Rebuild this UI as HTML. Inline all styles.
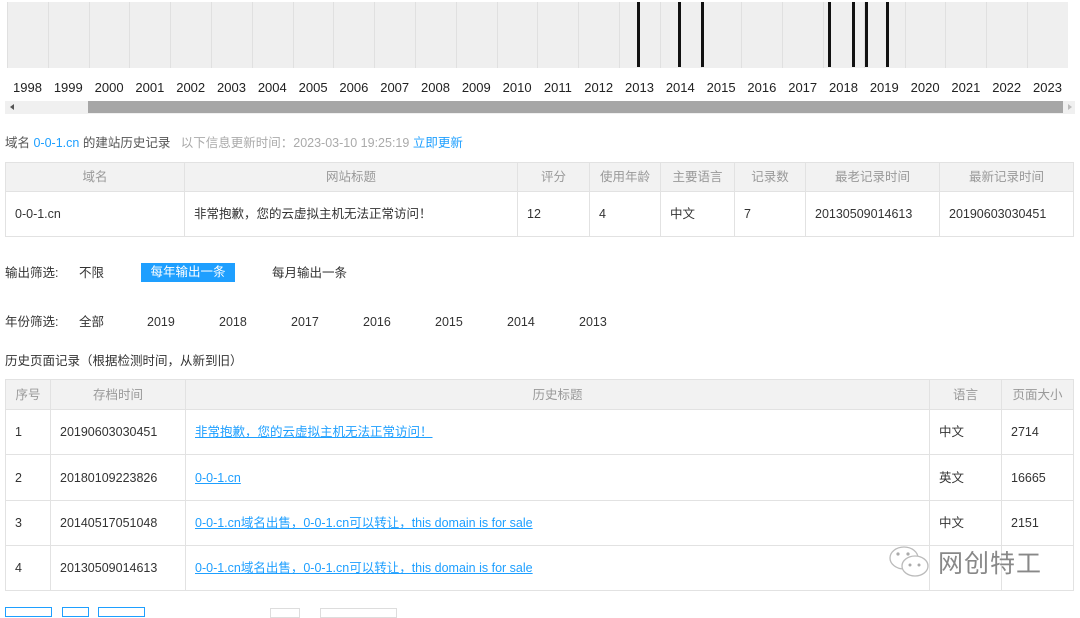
<!DOCTYPE html>
<html><head><meta charset="utf-8"><style>
*{margin:0;padding:0;box-sizing:border-box}
body{width:1080px;height:611px;overflow:hidden;background:#fff;font-family:"Liberation Sans","Noto Sans CJK SC",sans-serif;font-size:12.5px;line-height:16px;color:#333;position:relative}
.a{position:absolute;line-height:16px;white-space:nowrap}
.cell{position:absolute;top:2px;height:66px;width:41px;background:#efefef;border-left:1px solid #e0e0e0}
.yr{position:absolute;top:80px;width:41px;text-align:center;font-size:13px;line-height:16px;color:#222}
.bar{position:absolute;top:2px;height:65px;width:3px;background:#111}
table{position:absolute;border-collapse:collapse;font-size:12.5px;table-layout:fixed}
td,th{border:1px solid #e2e2e2;padding:0 9px;text-align:left;font-weight:normal;white-space:nowrap;line-height:16px;vertical-align:middle;overflow:hidden}
td span,th span,a{display:inline-block;height:16px;line-height:16px;vertical-align:middle}
th{background:#f2f2f2;color:#999;text-align:center}
a{color:#1e9fff;text-decoration:underline}
</style></head><body>
<div id="tl"></div>
<script>
var s='';for(var i=0;i<26;i++){var x=7+i*40.8;s+='<div class="cell" style="left:'+x+'px"></div><div class="yr" style="left:'+x+'px">'+(1998+i)+'</div>';}
[638,679,702,829,853,866,887].forEach(function(x){s+='<div class="bar" style="left:'+(x-1)+'px"></div>'});
document.getElementById('tl').innerHTML=s;
</script>
<div class="a" style="left:5px;top:101px;width:1070px;height:13px;background:#f0f0f0"></div>
<div class="a" style="left:88px;top:101px;width:975px;height:12px;background:#a6a6a6"></div>
<div class="a" style="left:10px;top:104px;width:0;height:0;border:3px solid transparent;border-right:4px solid #555;border-left:0"></div>
<div class="a" style="left:1068px;top:104px;width:0;height:0;border:3px solid transparent;border-left:4px solid #bbb;border-right:0"></div>
<div class="a" style="left:5px;top:135px;color:#555">域名 <span style="color:#1e9fff">0-0-1.cn</span> 的建站历史记录 &nbsp;&nbsp;<span style="color:#aaa">以下信息更新时间：2023-03-10 19:25:19</span> <span style="color:#1e9fff">立即更新</span></div>
<table style="left:5px;top:162px;width:1069px">
<tr style="height:29px"><th style="width:179px">域名</th><th style="width:333px">网站标题</th><th style="width:72px">评分</th><th style="width:71px">使用年龄</th><th style="width:74px">主要语言</th><th style="width:71px">记录数</th><th style="width:134px">最老记录时间</th><th>最新记录时间</th></tr>
<tr style="height:45px"><td><span>0-0-1.cn</span></td><td><span>非常抱歉，您的云虚拟主机无法正常访问！</span></td><td><span>12</span></td><td><span>4</span></td><td><span>中文</span></td><td><span>7</span></td><td><span>20130509014613</span></td><td><span>20190603030451</span></td></tr>
</table>
<div class="a" style="left:5px;top:265px">输出筛选:</div>
<div class="a" style="left:79px;top:265px">不限</div>
<div class="a" style="left:141px;top:263px;width:94px;height:19px;background:#1e9fff;color:#fff;text-align:center;line-height:19px">每年输出一条</div>
<div class="a" style="left:272px;top:265px">每月输出一条</div>
<div class="a" style="left:5px;top:314px">年份筛选:</div>
<div class="a" style="left:79px;top:314px">全部</div>
<div class="a" style="left:147px;top:314px">2019</div><div class="a" style="left:219px;top:314px">2018</div><div class="a" style="left:291px;top:314px">2017</div><div class="a" style="left:363px;top:314px">2016</div><div class="a" style="left:435px;top:314px">2015</div><div class="a" style="left:507px;top:314px">2014</div><div class="a" style="left:579px;top:314px">2013</div>
<div class="a" style="left:5px;top:353px">历史页面记录（根据检测时间，从新到旧）</div>
<table style="left:5px;top:379px;width:1069px">
<tr style="height:30px"><th style="width:45px">序号</th><th style="width:135px">存档时间</th><th style="width:744px">历史标题</th><th style="width:72px">语言</th><th>页面大小</th></tr>
<tr style="height:45px"><td><span>1</span></td><td><span>20190603030451</span></td><td><a>非常抱歉，您的云虚拟主机无法正常访问！</a></td><td><span>中文</span></td><td><span>2714</span></td></tr>
<tr style="height:46px"><td><span>2</span></td><td><span>20180109223826</span></td><td><a>0-0-1.cn</a></td><td><span>英文</span></td><td><span>16665</span></td></tr>
<tr style="height:45px"><td><span>3</span></td><td><span>20140517051048</span></td><td><a>0-0-1.cn域名出售，0-0-1.cn可以转让，this domain is for sale</a></td><td><span>中文</span></td><td><span>2151</span></td></tr>
<tr style="height:45px"><td><span>4</span></td><td><span>20130509014613</span></td><td><a>0-0-1.cn域名出售，0-0-1.cn可以转让，this domain is for sale</a></td><td></td><td></td></tr>
</table>
<div class="a" style="left:5px;top:607px;width:47px;height:10px;border:1px solid #1e9fff"></div>
<div class="a" style="left:62px;top:607px;width:27px;height:10px;border:1px solid #1e9fff"></div>
<div class="a" style="left:98px;top:607px;width:47px;height:10px;border:1px solid #1e9fff"></div>
<div class="a" style="left:270px;top:608px;width:30px;height:10px;border:1px solid #ddd"></div>
<div class="a" style="left:320px;top:608px;width:77px;height:10px;border:1px solid #ddd"></div>
<svg class="a" style="left:888px;top:545px" width="45" height="36" viewBox="0 0 45 36"><g fill="#fff" stroke="#bbb" stroke-width="1.3"><ellipse cx="16" cy="13" rx="14" ry="11"/><ellipse cx="27" cy="21" rx="13" ry="10"/></g><g fill="#aaa"><circle cx="10" cy="9" r="1.6"/><circle cx="20" cy="9" r="1.6"/><circle cx="22" cy="20" r="1.5"/><circle cx="31" cy="20" r="1.5"/></g></svg>
<div class="a" style="left:938px;top:549px;font-size:25px;line-height:30px;color:#888;letter-spacing:1px">网创特工</div>
</body></html>
